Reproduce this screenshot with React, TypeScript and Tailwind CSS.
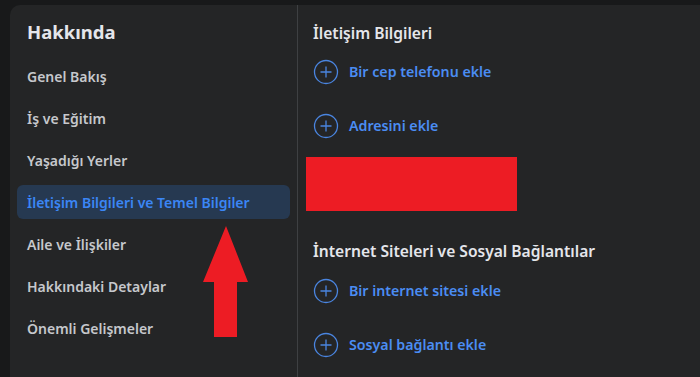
import React from "react"

const menuItems = [
  "Genel Bakış",
  "İş ve Eğitim",
  "Yaşadığı Yerler",
  "İletişim Bilgileri ve Temel Bilgiler",
  "Aile ve İlişkiler",
  "Hakkındaki Detaylar",
  "Önemli Gelişmeler",
]

const activeItem = "İletişim Bilgileri ve Temel Bilgiler"

const PlusCircle = () => (
  <svg width="26" height="26" viewBox="0 0 26 26" fill="none" className="shrink-0">
    <circle cx="13" cy="13" r="11.5" stroke="#4a85e0" strokeWidth="1.3" />
    <path d="M13 7.5v11M7.5 13h11" stroke="#4a85e0" strokeWidth="1.3" />
  </svg>
)

const AddRow = ({ label }: { label: string }) => (
  <div className="flex items-center gap-[10px] h-[30px]">
    <PlusCircle />
    <span className="text-[14.2px] font-semibold text-[#4b8df3]">{label}</span>
  </div>
)

const UpArrow = () => (
  <svg width="46" height="112" viewBox="0 0 46 112" className="absolute left-[203px] top-[226px]">
    <polygon points="23,0 45,56 34,56 34,111 11,111 11,56 0,56" fill="#ed1c24" />
  </svg>
)

export default function App() {
  return (
    <div
      className="relative w-[700px] h-[377px] overflow-hidden bg-[#18191a] pt-[5px] pl-[10px]"
      style={{ fontFamily: '"Noto Sans", "Open Sans", sans-serif' }}
    >
      <div className="flex h-full bg-[#242526] rounded-tl-[10px]">
        {/* left menu */}
        <div className="w-[288px] shrink-0 border-r border-[#3e4042] px-[7px] pt-[15px]">
          <h2 className="px-[10px] text-[18.5px] font-bold text-[#e4e6eb] leading-[24px] mb-[15px]">Hakkında</h2>
          <div className="flex flex-col gap-[8px]">
            {menuItems.map((item) => (
              <div
                key={item}
                className={
                  item === activeItem
                    ? "h-[34px] flex items-center px-[10px] rounded-[6px] bg-[#263951] text-[#3b86f5] text-[14px] font-semibold"
                    : "h-[34px] flex items-center px-[10px] text-[#c6c8cc] text-[14px] font-semibold"
                }
              >
                {item}
              </div>
            ))}
          </div>
        </div>

        {/* right content */}
        <div className="flex-1 pt-[15px] pl-[15px]">
          <h3 className="text-[15.6px] font-semibold text-[#e4e6eb] leading-[26px]">İletişim Bilgileri</h3>
          <div className="flex flex-col gap-[24px] mt-[11px]">
            <AddRow label="Bir cep telefonu ekle" />
            <AddRow label="Adresini ekle" />
          </div>
          <div className="w-[211px] h-[54px] bg-[#ed1c24] -ml-[7px] mt-[16px]" />
          <h3 className="text-[15.6px] font-semibold text-[#e4e6eb] leading-[26px] mt-[27px]">
            İnternet Siteleri ve Sosyal Bağlantılar
          </h3>
          <div className="flex flex-col gap-[24px] mt-[12px]">
            <AddRow label="Bir internet sitesi ekle" />
            <AddRow label="Sosyal bağlantı ekle" />
          </div>
        </div>
      </div>
      <UpArrow />
    </div>
  )
}
